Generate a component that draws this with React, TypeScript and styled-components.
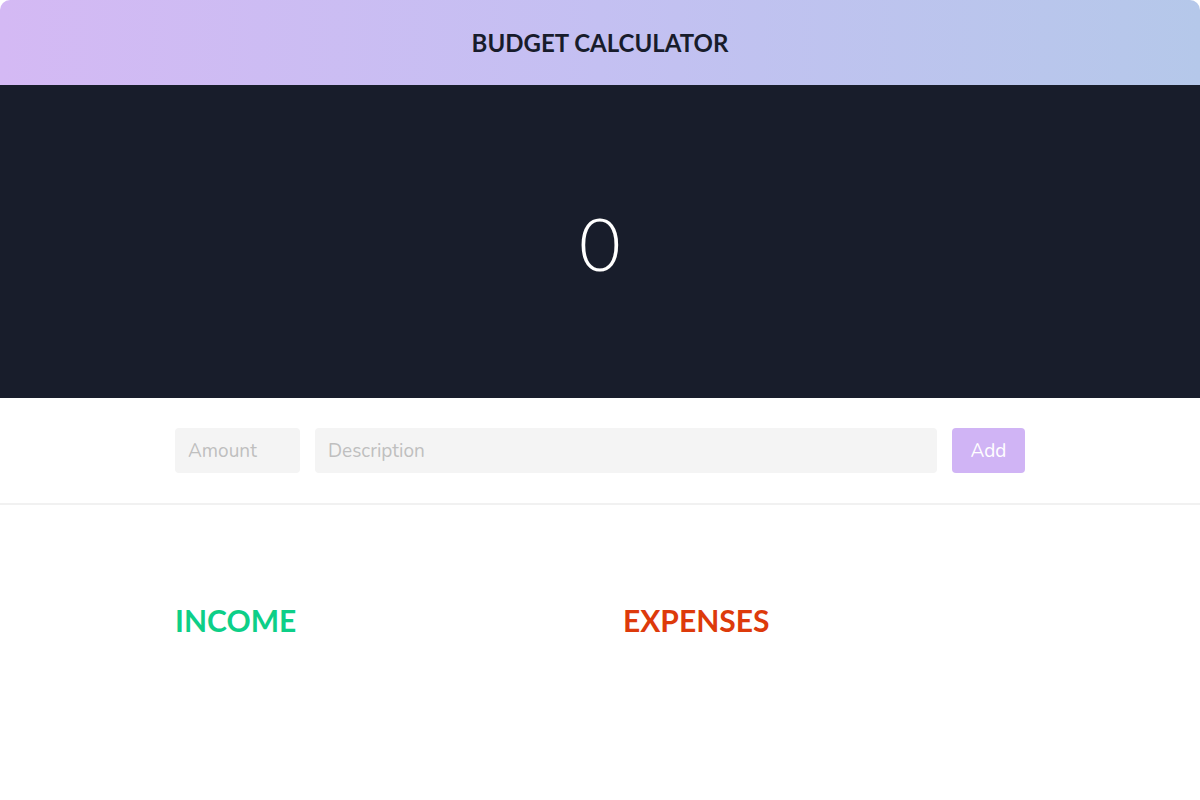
import styled, { createGlobalStyle } from "styled-components"

const GlobalStyle = createGlobalStyle`
    * { box-sizing: border-box; }
    body {
        margin: 0;
        background: #ffffff;
        font-family: "Lato", "Open Sans", sans-serif;
    }
`

const Header = styled.header`
    height: 85px;
    display: flex;
    align-items: center;
    justify-content: center;
    background: linear-gradient(90deg, #d4b9f4 0%, #c4c0f2 50%, #b5c8ea 100%);
    border-radius: 10px 10px 0 0;
`

const Title = styled.h1`
    margin: 0;
    font-family: "Lato", sans-serif;
    font-weight: 700;
    font-size: 24px;
    color: #181c2b;
`

const Balance = styled.section`
    height: 313px;
    background: #181d2b;
    display: flex;
    align-items: center;
    justify-content: center;
`

const Total = styled.span`
    font-family: "Lato", sans-serif;
    font-weight: 300;
    font-size: 72px;
    color: #ffffff;
    margin-top: 2px;
`

const FormBar = styled.form`
    display: flex;
    justify-content: center;
    gap: 15px;
    padding: 30px 0;
    border-bottom: 2px solid #f1f1f1;
`

const Field = styled.input<{ $width?: number }>`
    height: 45px;
    width: ${(p) => (p.$width ? `${p.$width}px` : "auto")};
    flex: ${(p) => (p.$width ? "none" : "0 1 622px")};
    border: 0;
    border-radius: 4px;
    background: #f4f4f4;
    padding: 0 13px;
    font-family: "Nunito", "Open Sans", sans-serif;
    font-size: 19px;
    color: #333;
    outline: none;

    &::placeholder {
        color: #bfbfbf;
    }
`

const AddButton = styled.button`
    height: 45px;
    width: 73px;
    border: 0;
    border-radius: 4px;
    background: #d0b4f5;
    color: #ffffff;
    font-family: "Nunito", "Open Sans", sans-serif;
    font-size: 19px;
    cursor: pointer;
`

const Lists = styled.main`
    width: 850px;
    margin: 0 auto;
    padding-top: 97px;
    display: grid;
    grid-template-columns: 1fr 1fr;
    column-gap: 46px;
`

const ListTitle = styled.h2<{ $color: string }>`
    margin: 0;
    font-family: "Lato", sans-serif;
    font-weight: 700;
    font-size: 30px;
    color: ${(p) => p.$color};
`

export default function App() {
    return (
        <>
            <GlobalStyle />
            <Header>
                <Title>BUDGET CALCULATOR</Title>
            </Header>
            <Balance>
                <Total>0</Total>
            </Balance>
            <FormBar onSubmit={(e) => e.preventDefault()}>
                <Field $width={125} type="number" placeholder="Amount" />
                <Field type="text" placeholder="Description" />
                <AddButton type="submit">Add</AddButton>
            </FormBar>
            <Lists>
                <section>
                    <ListTitle $color="#0dcf88">INCOME</ListTitle>
                </section>
                <section>
                    <ListTitle $color="#dd3a0b">EXPENSES</ListTitle>
                </section>
            </Lists>
        </>
    )
}
